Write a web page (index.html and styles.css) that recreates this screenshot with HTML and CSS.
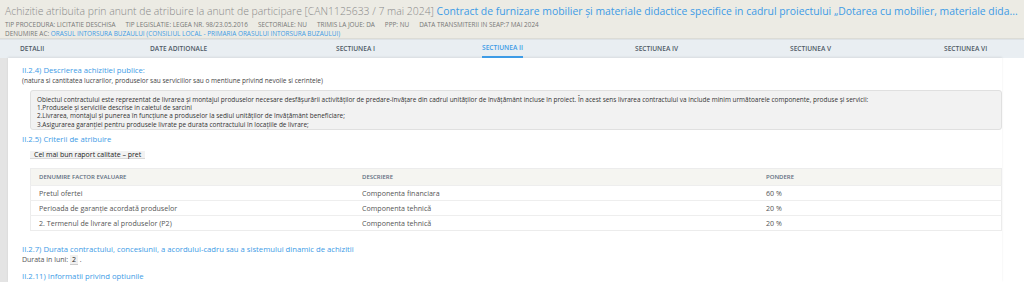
FILE: index.html
```html
<!DOCTYPE html>
<html lang="ro">
<head>
  <meta charset="UTF-8" />
  <title>Anunt de atribuire CAN1125633</title>
  <link rel="stylesheet" href="styles.css">
</head>
<body>

<header class="notice-head">
  <h1 class="notice-title">Achizitie atribuita prin anunt de atribuire la anunt de participare [CAN1125633 / 7 mai 2024] <span class="notice-name">Contract de furnizare mobilier și materiale didactice specifice in cadrul proiectului „Dotarea cu mobilier, materiale dida...</span></h1>
  <div class="notice-meta">
    <span>TIP PROCEDURA: LICITATIE DESCHISA</span>
    <span>TIP LEGISLATIE: LEGEA NR. 98/23.05.2016</span>
    <span>SECTORIALE: NU</span>
    <span>TRIMIS LA JOUE: DA</span>
    <span>PPP: NU</span>
    <span>DATA TRANSMITERII IN SEAP:7 MAI 2024</span>
  </div>
  <div class="notice-meta">DENUMIRE AC:&nbsp;<a class="ac-link">ORASUL INTORSURA BUZAULUI (CONSILIUL LOCAL - PRIMARIA ORASULUI INTORSURA BUZAULUI)</a></div>
</header>

<nav class="tabs">
  <a class="tab">DETALII</a>
  <a class="tab">DATE ADITIONALE</a>
  <a class="tab">SECTIUNEA I</a>
  <a class="tab active">SECTIUNEA II</a>
  <a class="tab">SECTIUNEA IV</a>
  <a class="tab">SECTIUNEA V</a>
  <a class="tab">SECTIUNEA VI</a>
</nav>

<main class="page">
  <section class="panel">
    <h4 class="sec-title">II.2.4) Descrierea achizitiei publice:</h4>
    <p class="hint">(natura si cantitatea lucrarilor, produselor sau serviciilor sau o mentiune privind nevoile si cerintele)</p>
    <div class="text-box">
      Obiectul contractului este reprezentat de livrarea și montajul produselor necesare desfășurării activităților de predare-învățare din cadrul unităților de învățământ incluse în proiect. În acest sens livrarea contractului va include minim următoarele componente, produse și servicii:<br>
      1.Produsele și serviciile descrise in caietul de sarcini<br>
      2.Livrarea, montajul și punerea în funcțiune a produselor la sediul unităților de învățământ beneficiare;<br>
      3.Asigurarea garanției pentru produsele livrate pe durata contractului în locațiile de livrare;
    </div>

    <h4 class="sec-title">II.2.5) Criterii de atribuire</h4>
    <div class="value-chip">Cel mai bun raport calitate – pret</div>

    <table class="criteria">
      <thead>
        <tr><th>DENUMIRE FACTOR EVALUARE</th><th>DESCRIERE</th><th>PONDERE</th></tr>
      </thead>
      <tbody>
        <tr><td>Pretul ofertei</td><td>Componenta financiara</td><td>60 %</td></tr>
        <tr><td>Perioada de garanție acordată produselor</td><td>Componenta tehnică</td><td>20 %</td></tr>
        <tr><td>2. Termenul de livrare al produselor (P2)</td><td>Componenta tehnică</td><td>20 %</td></tr>
      </tbody>
    </table>

    <h4 class="sec-title">II.2.7) Durata contractului, concesiunii, a acordului-cadru sau a sistemului dinamic de achizitii</h4>
    <p class="line">Durata in luni: <span class="num">2</span> .</p>

    <h4 class="sec-title spaced">II.2.11) Informatii privind optiunile</h4>
  </section>
</main>

</body>
</html>
```

FILE: styles.css
```css
body { margin: 0; background: #fff; color: #555; font-family: "Open Sans", "Liberation Sans", sans-serif; overflow: hidden; }
a { text-decoration: none; }

.notice-head { background: #ecebe4; padding: 3px 5px 0; border-bottom: 1px solid #dcdcd6; }
.notice-title { margin: 0; font-size: 10.4px; font-weight: 300; color: #8a8a8a; white-space: nowrap; line-height: 17px; }
.notice-name { color: #3d9be6; font-weight: 400; }
.notice-meta { display: flex; gap: 10px; font-size: 6.4px; color: #777; line-height: 9px; white-space: nowrap; }
.notice-meta + .notice-meta { gap: 0; }
.ac-link { color: #3d9be6; }

.tabs { display: grid; grid-template-columns: 130px 186px 146px 153px 155px 154px 1fr; padding-left: 20px; background: #e9eef2; border-top: 1px solid #dde2e6; height: 18px; }
.tab { font-size: 6.6px; font-weight: 600; color: #4f5a66; line-height: 18px; justify-self: start; }
.tab.active { color: #3d9be6; border-bottom: 2px solid #3d9be6; line-height: 16px; }

.page { border-left: 8px solid #e4e4e4; }
.panel { margin-right: 22px; padding: 6px 0 0 14px; box-shadow: 0 -1px 2px rgba(0, 0, 0, 0.08); }
.sec-title { margin: 0; font-size: 7.7px; font-weight: 400; color: #3d9be6; line-height: 12px; }
.sec-title.spaced { margin-top: 5px; }
.hint { margin: 0 0 4px; font-size: 6.5px; color: #444; line-height: 10px; }

.text-box { margin: 0 0 3px 8px; padding: 5px 6px 0; background: #f2f2f2; border: 1px solid #e0e0e0; border-radius: 3px; font-size: 6.45px; color: #333; line-height: 8.2px; }

.value-chip { width: fit-content; margin: 6px 0 0 8px; padding: 0 4px; background: #f2f2f2; border-bottom: 1px solid #d8d8d8; font-size: 7px; color: #222; line-height: 7px; height: 7px; }

.criteria { width: calc(100% - 8px); margin: 9px 0 12px 8px; border-collapse: collapse; border: 1px solid #ececec; font-size: 7.1px; color: #555; }
.criteria th { background: #f5f5f1; text-align: left; font-size: 6px; font-weight: 600; color: #5d6d80; height: 16px; padding: 0 8px; line-height: 8px; }
.criteria td { height: 14px; padding: 0 8px; border-top: 1px solid #eee; line-height: 8px; }
.criteria th:nth-child(1) { width: 307px; }
.criteria th:nth-child(2) { width: 388px; }

.line { margin: 0; font-size: 7px; color: #555; line-height: 10px; }
.num { display: inline-block; padding: 0 2px; background: #f0f0f0; border-bottom: 1px solid #ccc; color: #222; line-height: 9px; }
```
